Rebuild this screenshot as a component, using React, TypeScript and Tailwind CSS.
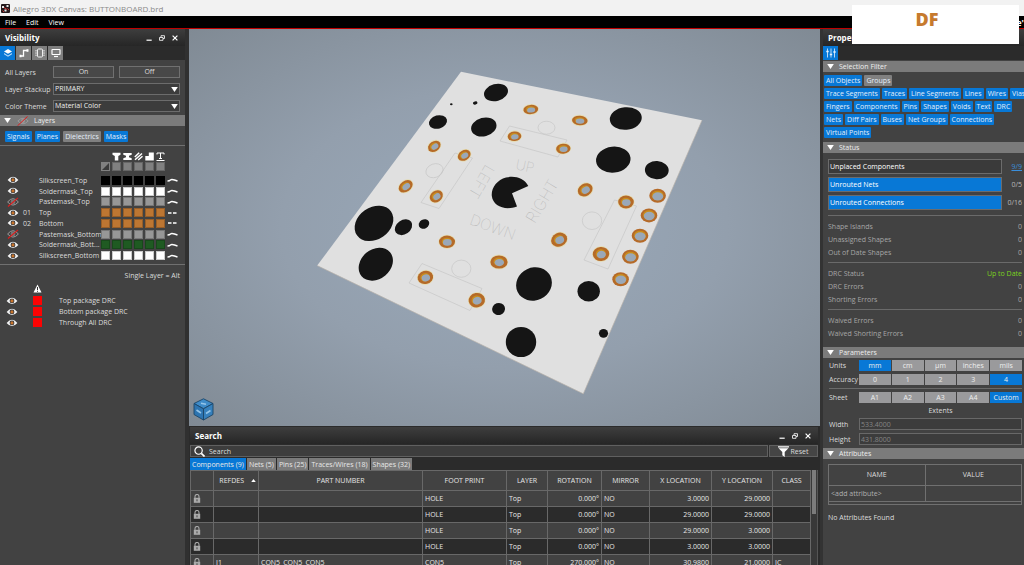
import { useState } from 'react';
import type { ReactNode } from 'react';

const layers = [
  { num: '', name: 'Silkscreen_Top', color: 'bg-black', on: true, line: 'wave' },
  { num: '', name: 'Soldermask_Top', color: 'bg-white', on: true, line: 'wave' },
  { num: '', name: 'Pastemask_Top', color: 'bg-[#979797]', on: false, line: 'wave' },
  { num: '01', name: 'Top', color: 'bg-[#bd7632]', on: true, line: 'dash' },
  { num: '02', name: 'Bottom', color: 'bg-[#bd7632]', on: true, line: 'dash' },
  { num: '', name: 'Pastemask_Bottom', color: 'bg-[#979797]', on: false, line: 'wave' },
  { num: '', name: 'Soldermask_Bott...', color: 'bg-[#1f5a22]', on: true, line: 'wave' },
  { num: '', name: 'Silkscreen_Bottom', color: 'bg-white', on: true, line: 'wave' },
];

const drcs = ['Top package DRC', 'Bottom package DRC', 'Through All DRC'];

const filterRows = [
  ['All Objects', 'Groups'],
  ['Trace Segments', 'Traces', 'Line Segments', 'Lines', 'Wires', 'Vias'],
  ['Fingers', 'Components', 'Pins', 'Shapes', 'Voids', 'Text', 'DRC'],
  ['Nets', 'Diff Pairs', 'Buses', 'Net Groups', 'Connections'],
  ['Virtual Points'],
];

const searchTabs = ['Components (9)', 'Nets (5)', 'Pins (25)', 'Traces/Wires (18)', 'Shapes (32)'];

const rows = [
  ['', '', 'HOLE', 'Top', '0.000°', 'NO', '3.0000', '29.0000', ''],
  ['', '', 'HOLE', 'Top', '0.000°', 'NO', '29.0000', '29.0000', ''],
  ['', '', 'HOLE', 'Top', '0.000°', 'NO', '29.0000', '3.0000', ''],
  ['', '', 'HOLE', 'Top', '0.000°', 'NO', '3.0000', '3.0000', ''],
  ['J1', 'CON5_CON5_CON5', 'CON5', 'Top', '270.000°', 'NO', '30.9800', '21.0000', 'IC'],
];

// cx, cy, rx, ry, rotation
const holes = [
  [496, 92.5, 12.2, 8.5, -15], [451.3, 104.2, 1.3, 1, 0], [475.2, 103, 2.3, 1.6, -15],
  [438, 122, 9.2, 6.6, -15], [483.8, 127, 12.9, 9.2, -15], [374, 223.4, 20.8, 16, -35],
  [403.5, 227.2, 9.4, 7.1, -35], [424, 224, 5.5, 4.5, -30], [375.8, 264.2, 18.6, 14.8, -40],
  [625.8, 118.5, 16, 11.3, -5], [613.3, 159.6, 17.3, 13, -6], [656.8, 170.2, 11.9, 9.1, 3],
  [534, 284, 18.2, 16.4, -25], [588.7, 291.3, 11.2, 10.2, 0], [603.5, 333.3, 4.6, 4.4, 0],
  [521, 342, 15.2, 15.1, 0], [498.6, 309, 6.5, 6, -20],
];

const pads = [
  [434.3, 146.3, 6.8, 5.2, -35], [464.2, 155.3, 6.8, 5.2, -30], [405.7, 186.3, 7.6, 5.6, -35],
  [436.3, 196.3, 7, 5.8, -35], [530.8, 109.5, 7.4, 4.8, -5], [579.8, 120.5, 7.8, 5, 3],
  [514.5, 136.3, 6.8, 5, -5], [563.3, 148.7, 7.2, 5.2, -5], [585.2, 189.8, 7.8, 6.4, -30],
  [626, 202, 7.8, 6.6, 0], [559.2, 239.7, 8.2, 7, -25], [601, 254, 8.2, 7.2, -5],
  [447, 241.8, 8, 6.4, 0], [499, 262, 8.6, 6.8, 0], [425.4, 277.4, 7.8, 6.8, -15],
  [476.8, 300.2, 8.2, 7.4, -10],
];

const pins = [
  [657.6, 195.8], [649, 215.4], [640, 235.8], [630.4, 256.8], [620.6, 279.2],
];

function Eye({ on = true }: { on?: boolean }) {
  return (
    <svg viewBox="0 0 12 10" className="h-[10px] w-3 shrink-0">
      <path d="M.6 5Q6-1.6 11.4 5Q6 11.2.6 5Z" fill={on ? '#f4f4f4' : 'none'} stroke={on ? 'none' : '#999'} />
      <circle cx="6" cy="4.9" r="2.4" fill={on ? '#2b3540' : '#777'} />
      {on && <circle cx="6" cy="4.9" r="1.6" fill="#c8742b" />}
      {!on && <path d="M1 9.5 11 .8" stroke="#e01b1b" strokeWidth="1.1" />}
    </svg>
  );
}

function Triangle() {
  return (
    <svg viewBox="0 0 8 6" className="h-[5px] w-[7px] shrink-0">
      <path d="M0 0h8L4 6Z" fill="#fff" />
    </svg>
  );
}

function PanelHeader({ title }: { title: string }) {
  return (
    <div className="flex h-[17px] shrink-0 items-center justify-between bg-gradient-to-b from-[#3e3e3e] to-[#262626] pr-[7px] pl-[5px]">
      <h2 className="text-[8px] font-bold text-white">{title}</h2>
      <div className="flex items-center gap-[7px]">
        <button aria-label="Minimize">
          <svg viewBox="0 0 6 6" className="size-[6px]"><path d="M.5 5.2h5.2" stroke="#fff" strokeWidth="1.2" /></svg>
        </button>
        <button aria-label="Float">
          <svg viewBox="0 0 6 6" className="size-[6px]" fill="none" stroke="#eee" strokeWidth=".9">
            <path d="M2 2V.7h3.5v2.8H4" /><path d="M.5 2.5H4v2.8H.5Z" />
          </svg>
        </button>
        <button aria-label="Close">
          <svg viewBox="0 0 6 6" className="size-[6px]"><path d="m.6.6 4.8 4.8M5.4.6.6 5.4" stroke="#fff" strokeWidth="1.2" /></svg>
        </button>
      </div>
    </div>
  );
}

function SectionHeader({ title, children }: { title: string; children?: ReactNode }) {
  return (
    <div className="flex h-[11px] shrink-0 items-center gap-[5px] bg-[#7b7b7b] pl-1 text-[#eee]">
      <Triangle />
      {children}
      <h3>{title}</h3>
    </div>
  );
}

function Chip({ label, off }: { label: string; off?: boolean }) {
  const [active, setActive] = useState(!off);
  return (
    <button
      onClick={() => setActive(!active)}
      className={`h-[11px] shrink-0 rounded-[1px] px-[2px] leading-[10px] whitespace-nowrap text-[#e4eefa] ${active ? 'bg-[#0878d6]' : 'bg-[#808080]'}`}
    >
      {label}
    </button>
  );
}

function Segments({ options, initial }: { options: string[]; initial: string }) {
  const [value, setValue] = useState(initial);
  return (
    <div className="grid flex-1 grid-cols-5 gap-px">
      {options.map((o) => (
        <button
          key={o}
          onClick={() => setValue(o)}
          className={`h-[11px] leading-[10px] text-[#eee] ${value === o ? 'bg-[#0878d6]' : 'bg-[#9a9a9c]'}`}
        >
          {o}
        </button>
      ))}
    </div>
  );
}

function SelectRow({ id, label, value }: { id: string; label: string; value: string }) {
  return (
    <div className="flex items-center">
      <label htmlFor={id} className="w-12 shrink-0">{label}</label>
      <div className="relative flex flex-1">
        <select id={id} className="h-3 flex-1 appearance-none border border-[#6c6c6c] bg-[#3c3c3c] pl-px leading-[10px] text-[#eee]">
          <option>{value}</option>
        </select>
        <div className="pointer-events-none absolute inset-y-0 right-[2px] flex items-center"><Triangle /></div>
      </div>
    </div>
  );
}

function VisibilityPanel() {
  return (
    <aside className="flex w-[189px] shrink-0 flex-col overflow-hidden border-r-4 border-[#303030] bg-[#424242]">
      <PanelHeader title="Visibility" />
      <div className="flex h-[14px] shrink-0 gap-px bg-[#2b2b2b]">
        <button aria-label="Layers" className="flex w-[15px] items-center justify-center bg-[#0878d6]">
          <svg viewBox="0 0 10 10" className="size-[10px]">
            <path d="M5 1 9 3.400 5 5.800 1 3.400Z" fill="#fff" />
            <path d="m1 5 4 2.400L9 5v1.200L5 8.800 1 6.200Z" fill="#b9dcfa" />
          </svg>
        </button>
        <button aria-label="Nets" className="flex w-[15px] items-center justify-center bg-[#7e7e7e]">
          <svg viewBox="0 0 10 10" className="size-[10px]" fill="none" stroke="#fff" strokeWidth="1.3">
            <path d="M1 8h3.500V2.500H9" /><path d="M.5 8h2M7.500 2.500h2" strokeWidth="2.400" />
          </svg>
        </button>
        <button aria-label="Components" className="flex w-[15px] items-center justify-center bg-[#7e7e7e]">
          <svg viewBox="0 0 10 10" className="size-[10px]" fill="none" stroke="#eee">
            <rect x="2.5" y="1" width="5" height="8" rx="1" />
            <path d="M1 2v6M9 2v6" strokeDasharray="1.5 .8" />
          </svg>
        </button>
        <button aria-label="Display" className="flex w-[15px] items-center justify-center bg-[#7e7e7e]">
          <svg viewBox="0 0 10 10" className="size-[10px]" fill="none" stroke="#fff" strokeWidth="1.2">
            <rect x="1" y="1.5" width="8" height="5" rx=".5" /><path d="M3 8.500h4" />
          </svg>
        </button>
      </div>
      <div className="flex flex-col gap-[5px] px-[5px] pt-[6px] pb-[3px]">
        <div className="flex items-center">
          <span className="w-12 shrink-0">All Layers</span>
          <div className="grid flex-1 grid-cols-2 gap-[5px]">
            <button className="h-3 border border-[#707070] bg-[#484848] leading-[10px]">On</button>
            <button className="h-3 border border-[#707070] bg-[#484848] leading-[10px]">Off</button>
          </div>
        </div>
        <SelectRow id="stackup" label="Layer Stackup" value="PRIMARY" />
        <SelectRow id="theme" label="Color Theme" value="Material Color" />
      </div>
      <SectionHeader title="Layers">
        <svg viewBox="0 0 12 10" className="ml-px h-[10px] w-3">
          <path d="M.8 5Q6-.5 11.200 5Q6 10.500.8 5Z" fill="none" stroke="#999" />
          <circle cx="6" cy="5" r="2" fill="#999" />
          <path d="M.5 9.800 10.500.5" stroke="#e01b1b" />
        </svg>
      </SectionHeader>
      <div className="flex gap-[3px] border-b border-[#707070] px-[5px] pt-[5px] pb-[3px]">
        <Chip label="Signals" />
        <Chip label="Planes" />
        <Chip label="Dielectrics" off />
        <Chip label="Masks" />
      </div>
      <div className="flex shrink-0 flex-col items-end gap-px pt-[6px] pr-5">
        <div className="grid w-16 grid-cols-6 gap-[2px]">
          <span />
          <svg viewBox="0 0 9 9" className="h-[9px] w-full"><path d="M.5.8h8v2L6.300 4v4.500H2.800V4L.5 2.800Z" fill="#fff" /></svg>
          <svg viewBox="0 0 9 9" className="h-[9px] w-full"><path d="M.3 1h8.400v1.800L6 3.800v1.400l2.700 1V8H.3V6.200l2.700-1V3.800L.3 2.800Z" fill="#fff" /></svg>
          <svg viewBox="0 0 9 9" className="h-[9px] w-full"><path d="M.8 5 5.200.8M1 7.800 8 1.500M4.200 8 8.500 4.200" stroke="#fff" strokeWidth="1.5" /></svg>
          <svg viewBox="0 0 9 9" className="h-[9px] w-full"><path d="M3.800.5h5v8H.3V4h3.500Z" fill="#fff" /></svg>
          <svg viewBox="0 0 9 9" className="h-[9px] w-full" fill="none" stroke="#fff"><path d="M1 2.500V1h7v1.500M4.500 1v5.500M3 6.500h3M.5 8.500h8" /></svg>
        </div>
        <div className="grid w-16 grid-cols-6 gap-[2px]">
          <svg viewBox="0 0 9 9" preserveAspectRatio="none" className="h-[9px] w-full"><path d="M0 0h9v9H0Z" fill="#808080" /><path d="m1 8 7-7v7Z" fill="#3a3a3a" /></svg>
          {[1, 2, 3, 4, 5].map((n) => (
            <span key={n} className="h-[9px] border border-[#666] bg-[#808080]" />
          ))}
        </div>
      </div>
      <div className="mt-1 flex h-[86px] shrink-0 flex-col">
        {layers.map((l) => (
          <div key={l.name} className="flex flex-1 items-center px-[7px]">
            <Eye on={l.on} />
            <span className="ml-1 w-4 shrink-0">{l.num}</span>
            <span className="w-0 flex-1 whitespace-nowrap">{l.name}</span>
            <div className="grid w-16 shrink-0 grid-cols-6 gap-[2px]">
              {[1, 2, 3, 4, 5, 6].map((n) => (
                <span key={n} className={`h-[9px] border border-black/20 ${l.color}`} />
              ))}
            </div>
            <svg viewBox="0 0 11 6" className="ml-[2px] h-[6px] w-[11px] shrink-0" fill="none" stroke="#fff" strokeWidth="1.4">
              {l.line === 'wave' ? <path d="M.5 4Q2.500 4 3.500 3T7.500 3 10.500 4" /> : <path d="M1 3h3.500M6 3h3.500" />}
            </svg>
          </div>
        ))}
      </div>
      <div className="mt-[3px] border-t border-[#707070] pt-[6px] pr-[5px] text-right">Single Layer = Alt</div>
      <div className="pt-1 pl-[33px]">
        <svg viewBox="0 0 9 9" className="mb-[2px] block size-[9px]">
          <path d="m4.500.5 4 8h-8Z" fill="#fff" /><path d="M4.500 3v3M4.500 6.800v1" stroke="#333" />
        </svg>
      </div>
      <div className="flex flex-col">
        {drcs.map((d) => (
          <div key={d} className="flex h-[11px] items-center pl-[6px]">
            <Eye />
            <span className="ml-[15px] size-[9px] bg-[#fd0303]" />
            <span className="ml-[17px]">{d}</span>
          </div>
        ))}
      </div>
    </aside>
  );
}

function Board() {
  return (
    <svg viewBox="189 29 631 397" className="block size-full" role="img" aria-label="3D board view">
      <path d="M461 71.8 702 120.3 583.3 393.8 317.2 265.6Z" fill="#e0e0e0" />
      <path d="M702 120.3 583.3 393.8 317.2 265.6" fill="none" stroke="#b7b2aa" strokeWidth=".7" />
      <g fill="none" stroke="#c2c2c2" strokeWidth=".6">
        <path d="M509.5 126 567 140 558 157 500 141Z" />
        <ellipse cx="546.5" cy="127.7" rx="8.5" ry="6.5" />
        <path d="M455 153 472.5 158 439 208.5 421 202.5Z" />
        <ellipse cx="434.5" cy="170.7" rx="8.8" ry="6.8" transform="rotate(-20 434.5 170.7)" />
        <path d="M422 263.5 482 288.5 470 310.5 409 283Z" />
        <ellipse cx="461.3" cy="268.7" rx="9.6" ry="8.6" />
        <path d="M614.5 200 636.5 206 608 269 584 260Z" />
        <ellipse cx="592" cy="220.7" rx="9.7" ry="8.8" />
      </g>
      <g fill="#b0b0b0" fontFamily="Inter, sans-serif" fontWeight="100" textAnchor="middle">
        <text transform="translate(524 171) rotate(12)" fontSize="14">UP</text>
        <text transform="translate(477 179) rotate(120)" fontSize="15">LEFT</text>
        <text transform="translate(491 232) rotate(20)" fontSize="15">DOWN</text>
        <text transform="translate(547 204) rotate(-59)" fontSize="16">RIGHT</text>
      </g>
      <g fill="#151515">
        {holes.map(([x, y, rx, ry, r]) => (
          <ellipse key={`${x}-${y}`} cx={x} cy={y} rx={rx} ry={ry} transform={`rotate(${r} ${x} ${y})`} />
        ))}
        <path d="M528.3 186C524 178 515 175.5 506 177.5C497 180 491 188 491.8 196C493 206 505 211 517 206.5L512 193.3Z" />
      </g>
      {pads.map(([x, y, rx, ry, r]) => (
        <g key={`${x}-${y}`} transform={`translate(${x} ${y}) rotate(${r})`}>
          <ellipse rx={rx + 0.7} ry={ry + 0.7} fill="#e4dcb4" />
          <ellipse rx={rx} ry={ry - 0.2} fill="#b56a28" />
          <ellipse cx="-.2" cy="-.2" rx={rx * 0.62} ry={ry * 0.62} fill="#c98d1c" />
          <ellipse cx=".3" cy=".6" rx={rx * 0.55} ry={ry * 0.52} fill="#9aa8b8" />
        </g>
      ))}
      {pins.map(([x, y]) => (
        <g key={x} transform={`translate(${x} ${y})`}>
          <ellipse rx="8.3" ry="7" fill="#b56a28" />
          <ellipse cy="-.3" rx="6" ry="4.8" fill="#c98d1c" />
          <ellipse cx=".2" cy=".6" rx="5.4" ry="4.2" fill="#9aa8b8" />
        </g>
      ))}
      <g stroke="#1c4566" strokeWidth=".9" strokeLinejoin="round">
        <path d="M203.5 398.8 213 403.5 203.5 408.8 194 403.5Z" fill="#3e8bc8" />
        <path d="M194 403.5 203.5 408.8V420L194 414.5Z" fill="#2d74b0" />
        <path d="M213 403.5 203.5 408.8V420L213 414.5Z" fill="#3680bc" />
        <path d="M201 403.2 206 404.2M196.5 410 201 413M206 413.5 210.5 410.5" stroke="#94c4e8" strokeWidth="1.6" />
      </g>
    </svg>
  );
}

function SearchPanel() {
  const [tab, setTab] = useState(searchTabs[0]);
  const right = [4, 6, 7];
  return (
    <section className="flex h-[139px] shrink-0 flex-col overflow-hidden bg-[#2b2b2b] pt-px pr-[2px] pl-px">
      <PanelHeader title="Search" />
      <div className="mt-px flex h-3 shrink-0 gap-px">
        <label className="flex flex-1 items-center gap-1 border border-[#606060] bg-[#3d3d3d] pl-[3px]">
          <svg viewBox="0 0 12 12" className="size-[11px]" fill="none" stroke="#fff" strokeWidth="1.3">
            <circle cx="5" cy="5" r="4" /><path d="m8 8 3.500 3.500" strokeWidth="1.8" />
          </svg>
          <input aria-label="Search" placeholder="Search" className="min-w-0 flex-1 placeholder-[#ddd] outline-none" />
        </label>
        <button className="flex w-[49px] items-center justify-center gap-px border border-[#606060] bg-[#454545]">
          <svg viewBox="0 0 11 11" className="size-[11px]"><path d="M0 .3h11v1.200H0ZM.6 2.200h9.800L6.700 6v5L4.300 9.300V6Z" fill="#fff" /></svg>
          Reset
        </button>
      </div>
      <div className="flex h-[13px] shrink-0 gap-px pt-px">
        {searchTabs.map((t) => (
          <button
            key={t}
            onClick={() => setTab(t)}
            className={`px-[2px] whitespace-nowrap text-[#e8e8e8] ${tab === t ? 'bg-[#0878d6]' : 'bg-[#7b7b7b]'}`}
          >
            {t}
          </button>
        ))}
      </div>
      <div className="flex min-h-0 flex-1">
        <div className="min-w-0 flex-1 overflow-hidden">
          <table className="w-full table-fixed border-collapse text-[#e6e6e6]">
            <colgroup>
              <col className="w-[23px]" />
              <col className="w-[45px]" />
              <col />
              <col className="w-[84px]" />
              <col className="w-[41px]" />
              <col className="w-[54px]" />
              <col className="w-[48px]" />
              <col className="w-[62px]" />
              <col className="w-[61px]" />
              <col className="w-[38px]" />
            </colgroup>
            <thead>
              <tr className="h-5 bg-[#424242]">
                <th className="border border-[#686868]" />
                <th className="border border-[#686868] font-normal">
                  <span className="flex items-center justify-end gap-[7px] pr-[2px]">
                    REFDES
                    <svg viewBox="0 0 6 4" className="h-[3px] w-[5px]"><path d="M0 4h6L3 0Z" fill="#fff" /></svg>
                  </span>
                </th>
                {['PART NUMBER', 'FOOT PRINT', 'LAYER', 'ROTATION', 'MIRROR', 'X LOCATION', 'Y LOCATION', 'CLASS'].map((h) => (
                  <th key={h} className="border border-[#686868] font-normal whitespace-nowrap">{h}</th>
                ))}
              </tr>
            </thead>
            <tbody>
              {rows.map((r, i) => (
                <tr key={i} className="h-4 bg-[#424242] even:bg-[#2b2b2b]">
                  <td className="border border-[#686868] pl-[2px]">
                    <svg viewBox="0 0 8 9" className="h-[9px] w-2">
                      <path d="M2 4V2.500a2 2 0 0 1 4 0V4" fill="none" stroke="#aaa" strokeWidth="1.1" />
                      <rect x=".8" y="3.8" width="6.4" height="5" fill="#aaa" /><path d="M4 5.300v2" stroke="#444" />
                    </svg>
                  </td>
                  {r.map((c, j) => (
                    <td key={j} className={`border border-[#686868] px-[2px] whitespace-nowrap ${right.includes(j) ? 'text-right' : ''}`}>{c}</td>
                  ))}
                </tr>
              ))}
            </tbody>
          </table>
        </div>
        <div className="w-[7px] border-r border-[#555] bg-[#383838] pl-px">
          <div className="h-11 w-1 bg-[#7b7b7b]" />
        </div>
      </div>
    </section>
  );
}

function StatusBar({ label, value, link, full }: { label: string; value: string; link?: boolean; full?: boolean }) {
  return (
    <div className="flex items-center">
      <div className={`flex h-[15px] flex-1 items-center border border-[#6c6c6c] pl-px text-white ${full ? 'bg-[#0878d6]' : 'bg-[#3a3a3a]'}`}>{label}</div>
      <div className="w-5 text-right text-[#b8b8b8]">
        {link ? <a href="#unplaced" className="text-[#3a8fdc] underline">{value}</a> : value}
      </div>
    </div>
  );
}

function Counts({ items }: { items: string[][] }) {
  return (
    <dl className="border-t border-[#6a6a6a] pt-1 text-[#a6a6a6]">
      {items.map(([k, v]) => (
        <div key={k} className="flex h-[13px] items-center justify-between">
          <dt>{k}</dt>
          <dd className={v === '0' ? '' : 'text-[#7bd31f]'}>{v}</dd>
        </div>
      ))}
    </dl>
  );
}

function PropertiesPanel() {
  return (
    <aside className="flex w-[204px] shrink-0 flex-col overflow-hidden border-l-[3px] border-[#333] bg-[#424242]">
      <PanelHeader title="Properties" />
      <div className="mb-px flex h-[14px] shrink-0 bg-[#2b2b2b]">
        <button aria-label="Filters" className="flex w-[15px] items-center justify-center bg-[#0878d6]">
          <svg viewBox="0 0 10 10" className="size-[10px]" stroke="#e8f2fc">
            <path d="M1.500.5v9M5 .5v9M8.500.5v9" strokeWidth=".8" />
            <path d="M.3 3.500h2.400M3.800 6.500h2.400M7.300 4h2.400" strokeWidth="1.4" />
          </svg>
        </button>
      </div>
      <SectionHeader title="Selection Filter" />
      <div className="flex flex-col gap-[2px] pt-[3px] pb-1 pl-px">
        {filterRows.map((row) => (
          <div key={row[0]} className="flex gap-[2px]">
            {row.map((f) => (
              <Chip key={f} label={f} off={f === 'Groups'} />
            ))}
          </div>
        ))}
      </div>
      <SectionHeader title="Status" />
      <div className="flex flex-col gap-[3px] pt-[6px] pr-[2px] pb-[5px] pl-[5px]">
        <StatusBar label="Unplaced Components" value="9/9" link />
        <StatusBar label="Unrouted Nets" value="0/5" full />
        <StatusBar label="Unrouted Connections" value="0/16" full />
      </div>
      <div className="flex flex-col gap-[3px] pr-[2px] pb-[7px] pl-[5px]">
        <Counts items={[['Shape Islands', '0'], ['Unassigned Shapes', '0'], ['Out of Date Shapes', '0']]} />
        <Counts items={[['DRC Status', 'Up to Date'], ['DRC Errors', '0'], ['Shorting Errors', '0']]} />
        <Counts items={[['Waived Errors', '0'], ['Waived Shorting Errors', '0']]} />
      </div>
      <SectionHeader title="Parameters" />
      <div className="flex flex-col gap-[3px] pt-[2px] pr-[2px] pb-[3px] pl-[6px]">
        <div className="flex items-center">
          <span className="w-[30px]">Units</span>
          <Segments options={['mm', 'cm', 'µm', 'inches', 'mils']} initial="mm" />
        </div>
        <div className="flex items-center border-b border-[#6a6a6a] pb-[3px]">
          <span className="w-[30px]">Accuracy</span>
          <Segments options={['0', '1', '2', '3', '4']} initial="4" />
        </div>
        <div className="flex items-center">
          <span className="w-[30px]">Sheet</span>
          <Segments options={['A1', 'A2', 'A3', 'A4', 'Custom']} initial="Custom" />
        </div>
        <p className="pl-[30px] text-center">Extents</p>
        <div className="flex items-center">
          <label htmlFor="width" className="w-[30px]">Width</label>
          <input id="width" disabled value="533.4000" className="h-3 min-w-0 flex-1 border border-[#686868] bg-[#3c3c3c] pl-px text-[#858585]" />
        </div>
        <div className="flex items-center">
          <label htmlFor="height" className="w-[30px]">Height</label>
          <input id="height" disabled value="431.8000" className="h-3 min-w-0 flex-1 border border-[#686868] bg-[#3c3c3c] pl-px text-[#858585]" />
        </div>
      </div>
      <SectionHeader title="Attributes" />
      <div className="pt-[5px] pr-[2px] pl-[5px]">
        <div className="border border-[#707070] pb-[2px]">
          <table className="w-full table-fixed border-collapse">
            <thead>
              <tr className="h-5">
                <th className="border-r border-b border-[#707070] font-normal">NAME</th>
                <th className="border-b border-[#707070] font-normal">VALUE</th>
              </tr>
            </thead>
            <tbody>
              <tr className="h-4">
                <td className="border-r border-b border-[#707070] pl-[2px] text-[#b0b0b0]">&lt;add attribute&gt;</td>
                <td className="border-b border-[#707070]" />
              </tr>
            </tbody>
          </table>
        </div>
        <p className="pt-2">No Attributes Found</p>
      </div>
    </aside>
  );
}

export default function App() {
  return (
    <div className="relative flex h-screen flex-col overflow-hidden bg-[#303030] font-['Open_Sans','Noto_Sans',sans-serif] text-[7px] leading-[9px] text-[#dcdcdc]">
      <header className="flex h-4 shrink-0 items-center gap-[3px] bg-[#f2f2f2] pl-px">
        <svg viewBox="0 0 9 9" className="size-[9px]">
          <rect width="9" height="9" rx="1" fill="#241a1c" />
          <path d="M1 2h2v2H1ZM5.500 1h2v2h-2ZM3.500 5.500h2v2h-2Z" fill="#e8e8e8" />
          <path d="m3 3.500 3 2M1.500 6.500 3 8M6.500 4.500 8 6" stroke="#c33" />
        </svg>
        <h1 className="text-[8px] text-[#8a8a8a]">Allegro 3DX Canvas: BUTTONBOARD.brd</h1>
      </header>
      <nav className="flex h-[13px] shrink-0 items-center gap-[10px] border-b border-[#c00000] bg-black pl-[5px] text-white">
        <button>File</button>
        <button>Edit</button>
        <button>View</button>
        <span className="ml-auto text-[9px] font-bold">e'</span>
      </nav>
      <div className="flex min-h-0 flex-1">
        <VisibilityPanel />
        <main className="flex min-w-0 flex-1 flex-col">
          <div className="min-h-0 flex-1 bg-[radial-gradient(ellipse_at_center,#9aaabb_0%,#939fad_50%,#808a94_100%)]">
            <Board />
          </div>
          <SearchPanel />
        </main>
        <PropertiesPanel />
      </div>
      <div className="absolute top-[5px] right-[5px] flex h-[39px] w-[167px] justify-center bg-white pt-1 pr-[17px] text-[18px] leading-5 font-extrabold text-[#c67a2e]">DF</div>
    </div>
  );
}
